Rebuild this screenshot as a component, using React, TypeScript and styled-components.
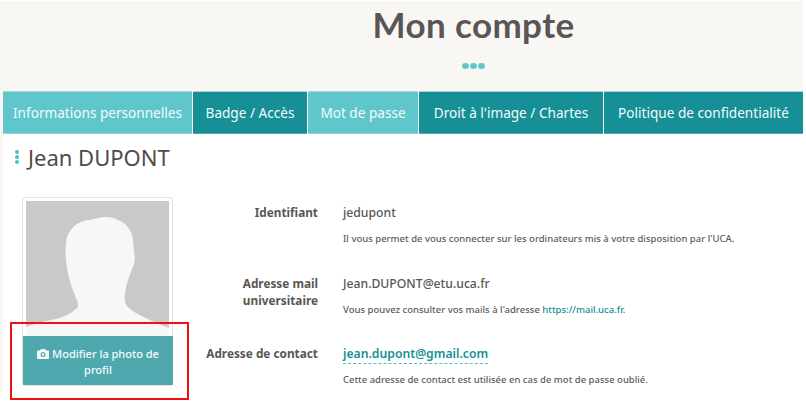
import React from "react";
import styled, { createGlobalStyle } from "styled-components";

const Global = createGlobalStyle`
  html, body { margin: 0; padding: 0; background: #fff; }
  body { font-family: "Noto Sans", "Open Sans", sans-serif; color: #5a5655; overflow: hidden; }
  * { box-sizing: border-box; }
`;

const Page = styled.div`
  position: relative;
  width: 806px;
  height: 406px;
  overflow: hidden;
  padding: 1px 3px 0 0;
`;

const Shell = styled.div`
  height: 391px;
  padding-left: 3px;
  background: #f9f7f4;
  display: flex;
  flex-direction: column;
`;

const Hero = styled.header`
  height: 90px;
  margin-left: -3px;
  display: flex;
  flex-direction: column;
  align-items: center;
  padding-left: 144px;
`;

const Title = styled.h1`
  margin: 3px 0 0;
  font-family: "Lato", "Noto Sans", sans-serif;
  font-size: 35px;
  line-height: 40px;
  font-weight: 700;
  color: #5a5655;
  letter-spacing: 0.4px;
`;

const Dots = styled.div`
  display: flex;
  gap: 1px;
  margin-top: 19px;
`;

const Dot = styled.span`
  width: 7px;
  height: 6px;
  border-radius: 50%;
  background: #5fc6cc;
`;

const Tabs = styled.nav`
  display: flex;
  height: 43px;
  background: #fff;
  gap: 1px;
`;

const Tab = styled.a<{ $light?: boolean; $w: number }>`
  width: ${(p) => p.$w}px;
  flex: none;
  display: flex;
  align-items: center;
  justify-content: center;
  background: ${(p) => (p.$light ? "#5fc6cc" : "#178f97")};
  color: #f2fbfb;
  font-size: 13.6px;
  white-space: nowrap;
  border-bottom: 1px solid ${(p) => (p.$light ? "#8ed8dc" : "#4fa8ae")};
  border-top: 1px solid #a9d6d9;
`;

const Content = styled.main`
  flex: 1;
  background: #fff;
  padding: 0 0 0 12px;
`;

const Name = styled.h2`
  margin: 8px 0 0;
  display: flex;
  align-items: center;
  gap: 9px;
  font-size: 22px;
  line-height: 30px;
  font-weight: 400;
  color: #4f4b4a;
  height: 30px;
`;

const VDots = styled.span`
  display: flex;
  flex-direction: column;
  gap: 1px;
`;

const VDot = styled.span`
  width: 4px;
  height: 4px;
  border-radius: 50%;
  background: #4fc0c7;
`;

const Body = styled.div`
  display: flex;
  margin-top: 25px;
  padding-left: 7px;
`;

const Card = styled.div`
  width: 151px;
  height: 189px;
  flex: none;
  border: 1px solid #e4e4e4;
  border-radius: 3px;
  padding: 3px 0 0;
  display: flex;
  flex-direction: column;
  align-items: center;
`;

const Avatar = styled.svg`
  display: block;
  width: 143px;
  height: 135px;
  flex: none;
`;

const PhotoButton = styled.button`
  width: 150px;
  height: 49px;
  flex: none;
  align-self: flex-start;
  border: 0;
  padding: 6px 10px 4px;
  background: #4fa8ae;
  color: #f4fbfb;
  font-family: inherit;
  font-size: 11px;
  font-weight: 500;
  line-height: 16px;
  text-align: center;
`;

const CameraIcon = styled.svg`
  width: 12px;
  height: 10px;
  vertical-align: -1px;
  margin-right: 3px;
`;

const Fields = styled.div`
  display: flex;
  flex-direction: column;
`;

const Row = styled.div<{ $h: number }>`
  display: grid;
  grid-template-columns: 145px 1fr;
  column-gap: 25px;
  height: ${(p) => p.$h}px;
`;

const Label = styled.div`
  text-align: right;
  font-size: 11.8px;
  line-height: 17px;
  font-weight: 700;
  color: #5a5655;
  padding-top: 7px;
`;

const Value = styled.div`
  font-size: 12.2px;
  line-height: 17px;
  font-weight: 500;
  color: #5a5655;
  padding-top: 7px;
`;

const Editable = styled.span`
  color: #178f97;
  font-weight: 600;
  border-bottom: 1px dashed #4fc0c7;
  padding-bottom: 1px;
`;

const Hint = styled.p`
  margin: 11px 0 0;
  font-size: 9.5px;
  line-height: 13px;
  font-weight: 500;
  color: #5f5b59;
  white-space: nowrap;
`;

const HintLink = styled.a`
  color: #178f97;
`;

const Highlight = styled.div`
  position: absolute;
  left: 10px;
  top: 322px;
  width: 179px;
  height: 78px;
  border: 2px solid #f01010;
  pointer-events: none;
`;

export default function App() {
  return (
    <Page>
      <Global />
      <Shell>
        <Hero>
          <Title>Mon compte</Title>
          <Dots>
            <Dot />
            <Dot />
            <Dot />
          </Dots>
        </Hero>
        <Tabs>
          <Tab $light $w={189}>Informations personnelles</Tab>
          <Tab $w={114}>Badge / Accès</Tab>
          <Tab $light $w={110}>Mot de passe</Tab>
          <Tab $w={184}>Droit à l'image / Chartes</Tab>
          <Tab $w={199}>Politique de confidentialité</Tab>
        </Tabs>
        <Content>
          <Name>
            <VDots>
              <VDot />
              <VDot />
              <VDot />
            </VDots>
            Jean DUPONT
          </Name>
          <Body>
            <Card>
              <Avatar viewBox="0 0 143 135">
                <rect width="143" height="135" fill="#c9c9c9" />
                <path
                  d="M0 126 C8 123 18 120 30 118 C38 116 46 112 51 107 C53 104 52 101 50 97 C47 90 44 82 42 72 C40 62 39 52 40 42 C41 33 45 27 51 23 C57 19 65 19 72 17 C80 15 86 16 92 19 C100 22 105 28 107 38 L108 52 C110 57 108 64 106 68 C103 76 100 84 99 92 C98 100 99 104 103 107 C108 112 118 116 126 120 C132 123 138 125 143 127 L143 135 L0 135 Z"
                  fill="#f6f7f7"
                />
              </Avatar>
              <PhotoButton>
                <CameraIcon viewBox="0 0 24 20">
                  <path
                    fill="#f4fbfb"
                    fillRule="evenodd"
                    d="M8 0h8l2 3h4a2 2 0 0 1 2 2v13a2 2 0 0 1-2 2H2a2 2 0 0 1-2-2V5a2 2 0 0 1 2-2h4zM12 6a5 5 0 1 0 0 10 5 5 0 0 0 0-10z"
                  />
                  <circle cx="12" cy="11" r="2.6" fill="#f4fbfb" />
                </CameraIcon>
                Modifier la photo de profil
              </PhotoButton>
            </Card>
            <Fields>
              <Row $h={71}>
                <Label>Identifiant</Label>
                <Value>
                  jedupont
                  <Hint>Il vous permet de vous connecter sur les ordinateurs mis à votre disposition par l'UCA.</Hint>
                </Value>
              </Row>
              <Row $h={70}>
                <Label>
                  Adresse mail
                  <br />
                  universitaire
                </Label>
                <Value>
                  Jean.DUPONT@etu.uca.fr
                  <Hint>
                    Vous pouvez consulter vos mails à l'adresse <HintLink>https://mail.uca.fr</HintLink>.
                  </Hint>
                </Value>
              </Row>
              <Row $h={50}>
                <Label>Adresse de contact</Label>
                <Value>
                  <Editable>jean.dupont@gmail.com</Editable>
                  <Hint>Cette adresse de contact est utilisée en cas de mot de passe oublié.</Hint>
                </Value>
              </Row>
            </Fields>
          </Body>
        </Content>
      </Shell>
      <Highlight />
    </Page>
  );
}
